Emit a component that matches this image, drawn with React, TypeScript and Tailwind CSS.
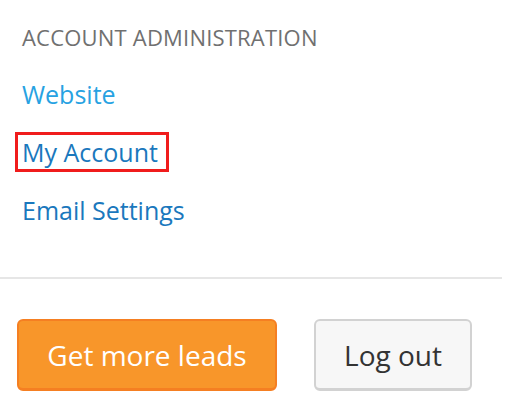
import React from "react";

const links = [
  { label: "Website", color: "text-[#27a2e2]", boxed: false },
  { label: "My Account", color: "text-[#1a78bd]", boxed: true },
  { label: "Email Settings", color: "text-[#1a78bd]", boxed: false },
];

const App: React.FC = () => {
  return (
    <div className="w-[522px] h-[407px] bg-white font-['Open_Sans',sans-serif] pt-[24px]">
      <div className="pl-[22px]">
        {/* Section title */}
        <h2 className="text-[22px] tracking-[0.2px] leading-[26px] text-[#707070] uppercase">Account Administration</h2>

        {/* Links */}
        <ul className="mt-[15px]">
          {links.map((l) => (
            <li key={l.label} className="h-[58px] flex items-center">
              {l.boxed ? (
                <a href="#" className={`-ml-[7px] pl-[4px] pr-[8px] border-[3px] border-[#f01c1c] text-[25px] leading-[34px] ${l.color}`}>
                  {l.label}
                </a>
              ) : (
                <a href="#" className={`text-[25px] leading-[58px] ${l.color}`}>
                  {l.label}
                </a>
              )}
            </li>
          ))}
        </ul>
      </div>

      {/* Divider */}
      <div className="mt-[38px] w-[502px] h-[2px] bg-[#e6e6e6]" />

      {/* Actions */}
      <div className="mt-[40px] pl-[17px] flex gap-[37px]">
        <button className="w-[260px] h-[72px] rounded-[6px] bg-[#f8962a] border-2 border-b-[3px] border-[#f57f22] text-white text-[28px]">
          Get more leads
        </button>
        <button className="w-[158px] h-[72px] rounded-[6px] bg-[#f7f7f7] border-2 border-b-[3px] border-[#d2d2d2] text-[#333] text-[28px]">
          Log out
        </button>
      </div>
    </div>
  );
};

export default App;
